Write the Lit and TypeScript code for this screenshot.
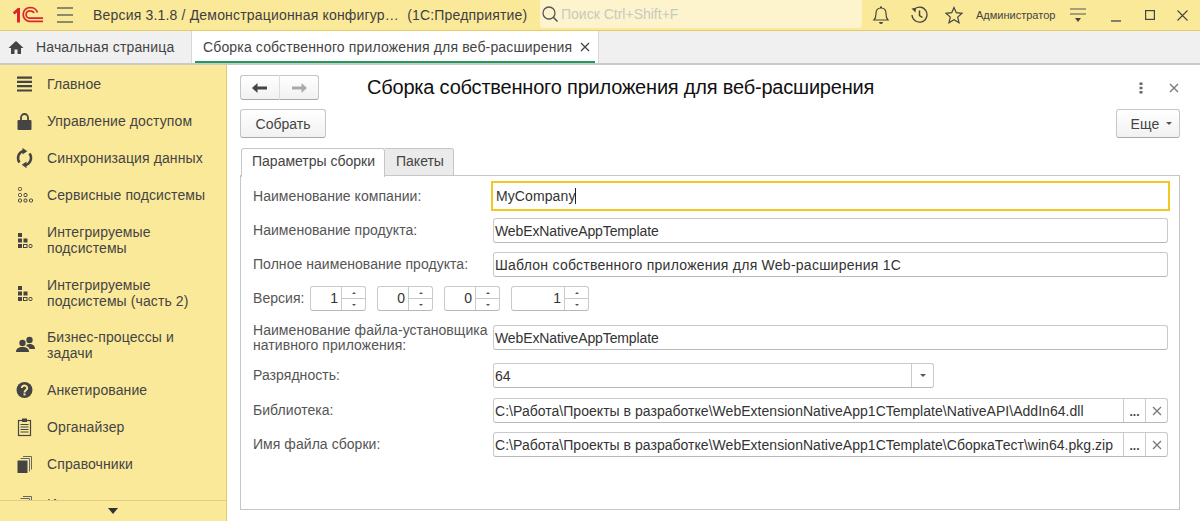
import { LitElement, html, css, svg } from "lit";
import { customElement } from "lit/decorators.js";

const ICONS: Record<string, unknown> = {
  main: svg`<path d="M2 2.500h15v2.200H2zM2 6.800h15v2.200H2zM2 11.100h15v2.200H2zM2 15.400h15v2.200H2z" fill="#444"/>`,
  lock: svg`<path d="M6 9.500V6.500a3.500 3.500 0 0 1 7 0V9.500" fill="none" stroke="#444" stroke-width="1.800"/><rect x="2.500" y="9" width="14" height="10" rx="1" fill="#444"/>`,
  sync: svg`<path d="M4.500 14.500A7.300 7.300 0 0 1 8.500 3" fill="none" stroke="#444" stroke-width="2.500"/><path d="M7.500 -.2v6.700l4.700-3.300z" fill="#444"/><path d="M14.500 5.500A7.300 7.300 0 0 1 10.500 17" fill="none" stroke="#444" stroke-width="2.500"/><path d="M11.500 20.200v-6.700l-4.700 3.300z" fill="#444"/>`,
  service: svg`<g fill="none" stroke="#444" stroke-width="1"><rect x="3.500" y="2.500" width="3" height="3" rx="1"/><rect x="3.500" y="8.500" width="3" height="3" rx="1"/><rect x="9" y="8.500" width="3" height="3" rx="1"/><rect x="3.500" y="14" width="3" height="3" rx="1"/><rect x="9" y="14" width="3" height="3" rx="1"/><rect x="14.500" y="14" width="3" height="3" rx="1"/></g>`,
  integ: svg`<g fill="#444"><rect x="3" y="3" width="4" height="4"/><rect x="3" y="8.500" width="4" height="4"/><rect x="8.500" y="8.500" width="4" height="4"/><rect x="3" y="14" width="4" height="4"/></g><g fill="none" stroke="#444"><rect x="8.500" y="14.500" width="3.500" height="3"/><rect x="14" y="14.500" width="3" height="3" rx="1"/></g>`,
  people: svg`<g fill="#444"><circle cx="7.500" cy="8" r="3.200"/><path d="M1 17c0-3.300 2.500-5 6.500-5s6.500 1.700 6.500 5z"/><circle cx="14.500" cy="5" r="3.200"/><path d="M14.500 14h5.500c0-3.300-2.200-5-5.500-5-1 0-1.800 .2-2.500 .5 -.2 .6-.5 1-1 1.400 2 .5 3.300 1.600 3.500 3.100z"/></g>`,
  quiz: svg`<circle cx="9.500" cy="10" r="8" fill="#444"/><path d="M6.800 8a2.700 2.400 0 1 1 4.300 1.900c-1 .8-1.600 1.300-1.600 2.500" fill="none" stroke="#fbe99a" stroke-width="1.900"/><rect x="8.500" y="13.400" width="2" height="2" fill="#fbe99a"/>`,
  org: svg`<rect x="3.500" y="3.500" width="12" height="15" fill="none" stroke="#444" stroke-width="1.200"/><rect x="7" y="1.500" width="5" height="3.500" fill="#444"/><path d="M5.500 7.500h8M5.500 10h8M5.500 12.500h8M5.500 15h8" stroke="#444" stroke-width="1.200"/>`,
  refs: svg`<path d="M8 2.500h8.500v13" fill="none" stroke="#666"/><path d="M5.500 4.500H14.500v13" fill="none" stroke="#666"/><rect x="2.500" y="6.500" width="10" height="12.500" fill="#444"/>`,
};

const NAV: [string, string][] = [
  ["main", "Главное"],
  ["lock", "Управление доступом"],
  ["sync", "Синхронизация данных"],
  ["service", "Сервисные подсистемы"],
  ["integ", "Интегрируемые подсистемы"],
  ["integ", "Интегрируемые подсистемы (часть 2)"],
  ["people", "Бизнес-процессы и задачи"],
  ["quiz", "Анкетирование"],
  ["org", "Органайзер"],
  ["refs", "Справочники"],
  ["refs", "Инструменты"],
];

@customElement("app-root")
export class AppRoot extends LitElement {
  static styles = css`
    :host { display: block; width: 1200px; height: 521px; overflow: hidden; font-family: "Liberation Sans", Arial, sans-serif; font-size: 14px; color: #333; background: #fff; }
    svg { display: block; flex: none; }
    .top { height: 31px; box-sizing: border-box; background: #fbe99a; border-bottom: 1px solid #e3cb6c; display: flex; align-items: center; }
    .logo { margin-left: 12px; }
    .burger { margin-left: 13px; }
    .title { margin-left: 20px; width: 447px; white-space: pre; color: #3f3f3f; flex: none; padding-bottom: 1px; letter-spacing: .18px; }
    .search { width: 322px; height: 28px; margin-top: -2px; background: #fdf4cd; border-radius: 0 0 3px 3px; display: flex; align-items: center; gap: 2px; padding-left: 1px; box-sizing: border-box; color: #c9c9c0; flex: none; }
    .ti { flex: none; }
    .bell { margin-left: 10px; }
    .hist { margin-left: 20px; }
    .star { margin-left: 17px; }
    .user { margin-left: 13px; width: 84px; font-size: 11px; color: #444; flex: none; }
    .more { margin-left: 10px; }
    .min { margin-left: 25px; }
    .max { margin-left: 24px; }
    .cls { margin-left: 22px; }

    .tabs { height: 34px; box-sizing: border-box; background: #f0f0f0; border-bottom: 2px solid #c9c9c9; display: flex; }
    .home { width: 192px; display: flex; align-items: center; padding-left: 8px; gap: 12px; box-sizing: border-box; color: #444; border-right: 1px solid #d8d8d8; letter-spacing: .16px; }
    .active { width: 407px; background: #fff; border-right: 1px solid #d8d8d8; position: relative; display: flex; align-items: center; padding-left: 11px; gap: 8px; box-sizing: border-box; color: #444; letter-spacing: .15px; }
    .active::after { content: ""; position: absolute; left: 3px; right: 3px; bottom: 0; height: 2px; background: #1f9a5a; }

    .body { display: flex; height: 456px; }
    .side { width: 227px; flex: none; background: #fbe99a; border-right: 1px solid #e3cb6c; box-sizing: border-box; display: flex; flex-direction: column; position: relative; }
    .list { height: 435px; overflow: hidden; flex: none; }
    .nav { display: flex; align-items: center; padding: 10.500px 20px 10.500px 15px; gap: 12px; line-height: 16px; color: #444; letter-spacing: .1px; }
    .nav:nth-child(6) { margin-bottom: -1px; }
    .nav:nth-child(11) { margin-top: 3px; }
    .nav svg { margin: -2px 0; }
    .nav span { display: block; }
    .foot { height: 21px; border-top: 1px solid #e0cd80; display: flex; align-items: center; justify-content: center; box-sizing: border-box; }
    .foot i { width: 0; height: 0; border: 5.500px solid transparent; border-top: 6px solid #333; border-bottom: 0; }

    .main { flex: 1; padding: 10px 20px 10px 13px; min-width: 0; display: flex; flex-direction: column; }
    .head { display: flex; align-items: center; height: 25px; }
    .navbtns { width: 79px; height: 25px; display: flex; box-sizing: border-box; }
    .btn { border: 1px solid #c6c6c6; border-bottom-color: #a8a8a8; border-radius: 3px; background: linear-gradient(#fff, #f1f1f1); box-sizing: border-box; display: flex; align-items: center; justify-content: center; color: #444; }
    .navbtns .btn { flex: 1; }
    .navbtns .btn:first-child { border-radius: 3px 0 0 3px; border-right-color: #ddd; }
    .navbtns .btn:last-child { border-radius: 0 3px 3px 0; border-left: 0; }
    .h1 { margin-left: 48px; font-size: 20px; letter-spacing: -.2px; color: #111; flex: 1; white-space: nowrap; }
    .kebab { margin-right: 26px; }
    .x { margin-right: 1px; }
    .bar { display: flex; justify-content: space-between; margin-top: 9px; }
    .bar .btn { height: 29px; }
    .make { width: 86px; }
    .esche { width: 64px; gap: 6px; padding-left: 6px; letter-spacing: .2px; }
    .caret { width: 0; height: 0; border: 3px solid transparent; border-top: 3px solid #555; border-bottom: 0; }
    .tabbar { display: flex; margin-top: 10px; height: 28px; padding-left: 1px; position: relative; z-index: 1; }
    .tab1 { width: 144px; height: 29px; border: 1px solid #c6c6c6; border-bottom: 0; border-radius: 3px 3px 0 0; background: #fff; box-sizing: border-box; padding-left: 10px; line-height: 25px; color: #444; }
    .tab2 { width: 69px; height: 28px; border: 1px solid #c6c6c6; border-left: 0; border-radius: 0 3px 0 0; background: #ebebeb; box-sizing: border-box; padding-left: 11px; line-height: 25px; color: #444; }
    .panel { border: 1px solid #c6c6c6; height: 335px; box-sizing: border-box; padding: 3px 11px 0 12px; color: #555; margin-top: -1px; letter-spacing: .05px; }
    .row { display: flex; align-items: center; height: 25px; margin-top: 9px; }
    .row.first { height: 30px; margin-top: 2px; }
    .row.second { margin-top: 7px; }
    .label { width: 240px; flex: none; line-height: 15px; white-space: nowrap; }
    .field { flex: 1; height: 25px; border: 1px solid #cacaca; border-bottom-color: #b8b8b8; border-radius: 3px; box-sizing: border-box; display: flex; align-items: center; color: #333; background: #fff; overflow: hidden; letter-spacing: 0; }
    .val { flex: 1; padding-left: 1px; white-space: nowrap; overflow: hidden; }
    .tight { letter-spacing: -.12px; }
    .wide-text { letter-spacing: .25px; }
    .path { letter-spacing: .03px; }
    .focus { height: 30px; margin: 0 -2px; border: 2px solid #f4c823; border-radius: 0; letter-spacing: .1px; }
    .focus .val { padding-left: 3px; }
    .caretline { display: inline-block; width: 1px; height: 16px; background: #222; vertical-align: -3px; }
    .ver { gap: 11px; }
    .ver .label { width: 46px; }
    .spin { width: 56px; flex: none; display: flex; height: 25px; border: 1px solid #cacaca; border-bottom-color: #b8b8b8; border-radius: 3px; box-sizing: border-box; color: #333; font-size: 14px; }
    .spin.wide { width: 78px; }
    .spin .n { flex: 1; text-align: right; line-height: 23px; padding-right: 3px; }
    .arrows { width: 23px; border-left: 1px solid #cacaca; display: flex; flex-direction: column; flex: none; }
    .arrows b { flex: 1; display: flex; align-items: center; justify-content: center; }
    .arrows b + b { border-top: 1px solid #cacaca; }
    .up { border: 2px solid transparent; border-bottom: 2px solid #555; border-top: 0; }
    .dn { border: 2px solid transparent; border-top: 2px solid #555; border-bottom: 0; }
    .side-btn { width: 22px; height: 100%; border-left: 1px solid #cacaca; display: flex; align-items: center; justify-content: center; box-sizing: border-box; flex: none; color: #444; }
    .dots { font-weight: 700; font-size: 12px; letter-spacing: 0; padding-top: 3px; }
    .sel { flex: none; width: 441px; }
    .row.two { margin-top: 14px; }
    .row.sel-row { margin-top: 13px; }
    .row.lib { margin-top: 10px; }
  `;

  private spin(n: string, wide = false) {
    return html`<div class="spin ${wide ? "wide" : ""}"><div class="n">${n}</div><div class="arrows"><b><i class="up"></i></b><b><i class="dn"></i></b></div></div>`;
  }

  private close(s = "#777") {
    return html`<svg width="10" height="10" viewBox="0 0 10 10"><path d="M1 1l8 8M9 1L1 9" stroke=${s} stroke-width="1.300"/></svg>`;
  }

  render() {
    return html`
      <div class="top">
        <svg class="logo" width="32" height="20" viewBox="0 0 32 20">
          <path d="M.8 7.500L5.800 3H8V17.500H5V7.500L2.500 9.500z" fill="#d9252b"/>
          <path d="M25.500 7.500C24.500 4.500 21.500 2.500 18 2.500a7 7 0 0 0 -1 13.900H31" fill="none" stroke="#d9252b" stroke-width="1.700"/>
          <path d="M22 8C21.500 6.700 20 5.800 18 5.800a3.700 3.700 0 0 0 -.5 7.400H31" fill="none" stroke="#d9252b" stroke-width="1.700"/>
        </svg>
        <svg class="burger" width="16" height="16" viewBox="0 0 16 16"><path d="M0 1h16M0 8h16M0 15h16" stroke="#6a6a5c" stroke-width="1.500"/></svg>
        <div class="title">Версия 3.1.8 / Демонстрационная конфигур…  (1С:Предприятие)</div>
        <div class="search">
          <svg width="18" height="18" viewBox="0 0 18 18"><circle cx="8" cy="8" r="6" fill="none" stroke="#555" stroke-width="1.300"/><path d="M12.300 12.300l4.200 4.200" stroke="#555" stroke-width="1.600"/></svg>
          <span>Поиск Ctrl+Shift+F</span>
        </div>
        <svg class="ti bell" width="18" height="20" viewBox="0 0 18 20"><path d="M2 15c1.500-1.500 2-3 2-6.500C4 5 6 3 9 3s5 2 5 5.500c0 3.500 .5 5 2 6.500z" fill="none" stroke="#444" stroke-width="1.200"/><path d="M7 17h4a2 2 0 0 1-4 0zM8 1.500h2V3H8z" fill="#444"/></svg>
        <svg class="ti hist" width="18" height="20" viewBox="0 0 18 20"><path d="M4 4.500A7.500 7.500 0 1 1 2 10" fill="none" stroke="#444" stroke-width="1.300"/><path d="M1.500 3.500l4.500-.5-.5 4.500z" fill="#444"/><path d="M9.500 5.500V10.500l3 2" fill="none" stroke="#444" stroke-width="1.500"/></svg>
        <svg class="ti star" width="18" height="18" viewBox="0 0 18 18"><path d="M9 1.500l2.300 5.200 5.700.6-4.300 3.800 1.300 5.600L9 13.800l-5 2.900 1.300-5.600L1 7.300l5.700-.6z" fill="none" stroke="#444" stroke-width="1.200"/></svg>
        <div class="user">Администратор</div>
        <svg class="ti more" width="16" height="18" viewBox="0 0 16 18"><path d="M0 3h16M0 8h16" stroke="#555" stroke-width="1.200"/><path d="M5 12h6l-3 4z" fill="#444"/></svg>
        <svg class="ti min" width="10" height="14" viewBox="0 0 10 14"><path d="M0 13h10" stroke="#444" stroke-width="1.300"/></svg>
        <svg class="ti max" width="10" height="10" viewBox="0 0 10 10"><rect x=".6" y=".6" width="8.800" height="8.800" fill="none" stroke="#444" stroke-width="1.200"/></svg>
        <svg class="ti cls" width="11" height="11" viewBox="0 0 11 11"><path d="M.5 .5l10 10M10.500 .5l-10 10" stroke="#444" stroke-width="1.100"/></svg>
      </div>
      <div class="tabs">
        <div class="home">
          <svg width="16" height="14" viewBox="0 0 16 14"><path d="M8 1L.5 8H3v6h3.500V9.500h3V14H13V8h2.500z" fill="#444"/></svg>
          <span>Начальная страница</span>
        </div>
        <div class="active"><span>Сборка собственного приложения для веб-расширения</span>${this.close("#444")}</div>
      </div>
      <div class="body">
        <div class="side">
          <div class="list">
            ${NAV.map(([i, t]) => html`<div class="nav"><svg width="20" height="20" viewBox="0 0 20 20">${ICONS[i]}</svg><span>${t}</span></div>`)}
          </div>
          <div class="foot"><i></i></div>
        </div>
        <div class="main">
          <div class="head">
            <div class="navbtns">
              <div class="btn"><svg width="16" height="10" viewBox="0 0 16 10"><path d="M5.500 0v3.500H15v3H5.500V10L0 5z" fill="#444"/></svg></div>
              <div class="btn"><svg width="16" height="10" viewBox="0 0 16 10"><path d="M10.500 0v3.500H1v3h9.500V10L16 5z" fill="#aaa"/></svg></div>
            </div>
            <div class="h1">Сборка собственного приложения для веб-расширения</div>
            <svg class="kebab" width="4" height="12" viewBox="0 0 4 12"><path d="M.5 .5h3v2.500h-3zM.5 4.700h3v2.500h-3zM.5 9h3v2.500h-3z" fill="#666"/></svg>
            <div class="x">${this.close("#777")}</div>
          </div>
          <div class="bar">
            <div class="btn make">Собрать</div>
            <div class="btn esche">Еще <i class="caret"></i></div>
          </div>
          <div class="tabbar">
            <div class="tab1">Параметры сборки</div>
            <div class="tab2">Пакеты</div>
          </div>
          <div class="panel">
            <div class="row first"><div class="label">Наименование компании:</div><div class="field focus"><div class="val">MyCompany<i class="caretline"></i></div></div></div>
            <div class="row second"><div class="label">Наименование продукта:</div><div class="field"><div class="val tight">WebExNativeAppTemplate</div></div></div>
            <div class="row"><div class="label">Полное наименование продукта:</div><div class="field"><div class="val wide-text">Шаблон собственного приложения для Web-расширения 1С</div></div></div>
            <div class="row ver"><div class="label">Версия:</div>${this.spin("1")}${this.spin("0")}${this.spin("0")}${this.spin("1", true)}</div>
            <div class="row two"><div class="label">Наименование файла-установщика<br />нативного приложения:</div><div class="field"><div class="val tight">WebExNativeAppTemplate</div></div></div>
            <div class="row sel-row"><div class="label">Разрядность:</div><div class="field sel"><div class="val">64</div><div class="side-btn"><i class="caret"></i></div></div></div>
            <div class="row lib"><div class="label">Библиотека:</div><div class="field"><div class="val path">C:\\Работа\\Проекты в разработке\\WebExtensionNativeApp1CTemplate\\NativeAPI\\AddIn64.dll</div><div class="side-btn dots">...</div><div class="side-btn">${this.close()}</div></div></div>
            <div class="row"><div class="label">Имя файла сборки:</div><div class="field"><div class="val path">C:\\Работа\\Проекты в разработке\\WebExtensionNativeApp1CTemplate\\СборкаТест\\win64.pkg.zip</div><div class="side-btn dots">...</div><div class="side-btn">${this.close()}</div></div></div>
          </div>
        </div>
      </div>
    `;
  }
}
